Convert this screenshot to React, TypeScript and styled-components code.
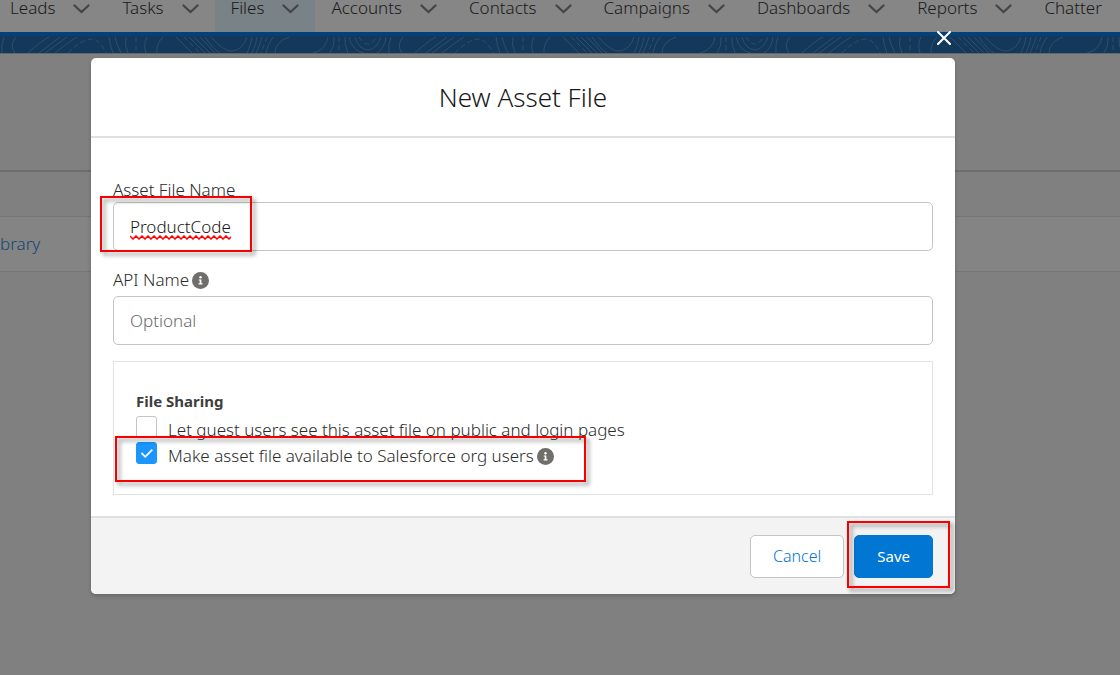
import React from "react";
import styled, { createGlobalStyle } from "styled-components";

const GlobalStyle = createGlobalStyle`
  *, *::before, *::after { box-sizing: border-box; }
  html, body, #root { min-height: 100vh; }
  body {
    margin: 0;
    overflow-x: hidden;
    background: #808080;
    color: #181818;
    font-family: "Noto Sans", "Open Sans", sans-serif;
    font-size: 17px;
    font-weight: 300;
    line-height: 26px;
  }
  button, input { font: inherit; color: inherit; }
`;

const Screen = styled.div`
  position: relative;
  min-height: 100vh;
  overflow: hidden;
`;

/* Page behind the dialog, in its dimmed colours */

const NavBar = styled.nav`
  display: flex;
  height: 36px;
  background: #868686;
  border-bottom: 4px solid #064078;
`;

const NavItem = styled.div<{ $active?: boolean }>`
  display: flex;
  flex: none;
  align-items: flex-start;
  gap: 18px;
  padding: 0 16px;
  background: ${(p) => (p.$active ? "#798287" : "transparent")};

  &:first-child { padding-left: 10px; }
`;

const NavLink = styled.a`
  color: #1a1a1a;
  line-height: 16px;
  text-decoration: none;
`;

const NavToggle = styled.button`
  display: flex;
  width: 17px;
  height: 18px;
  padding: 0;
  align-items: center;
  border: 0;
  background: none;
`;

const Band = styled.div`
  height: 18px;
  background: #143859;
  border-bottom: 1px solid #60686f;

  svg { display: block; }
`;

const PageHeader = styled.div`
  height: 118px;
  border-bottom: 2px solid #6d6d6d;
`;

const ColumnHeader = styled.div`
  height: 45px;
  border-bottom: 1px solid #757575;
`;

const ListRow = styled.div`
  display: flex;
  height: 55px;
  align-items: center;
  background: #848484;
  border-bottom: 1px solid #757575;
`;

const RowLink = styled.a`
  color: #124876;
  text-decoration: none;
`;

/* Dialog */

const Overlay = styled.div`
  position: absolute;
  inset: 0;
  display: flex;
  align-items: flex-start;
  padding: 58px 165px 58px 91px;
`;

const Dialog = styled.section`
  position: relative;
  flex: 1;
  border-radius: 5px;
  background: #fff;
  box-shadow: 0 2px 4px rgba(0, 0, 0, 0.2);
`;

const CloseButton = styled.button`
  position: absolute;
  top: -30px;
  right: 1px;
  display: flex;
  width: 20px;
  height: 20px;
  padding: 0;
  align-items: center;
  justify-content: center;
  border: 0;
  background: none;
`;

const DialogHeader = styled.header`
  padding: 21px 16px;
  border-bottom: 2px solid #e0e0e0;
  text-align: center;
`;

const Title = styled.h2`
  margin: 0;
  font-size: 26px;
  font-weight: 300;
  line-height: 36px;
`;

const DialogBody = styled.div`
  display: flex;
  flex-direction: column;
  gap: 16px;
  padding: 40px 22px 21px;
`;

const Field = styled.div`
  position: relative;
`;

const LabelRow = styled.div<{ $below?: number }>`
  display: flex;
  height: ${(p) => (p.$below ? 26 : 24)}px;
  margin-bottom: ${(p) => p.$below ?? 0}px;
  align-items: center;
  gap: 3px;
  color: #2b2b2b;
`;

const InputFrame = styled.div`
  position: relative;
`;

const TextInput = styled.input`
  display: block;
  width: 100%;
  height: 49px;
  padding: 0 16px;
  border: 1px solid #c4c4c4;
  border-radius: 5px;
  background: #fff;
  outline: 0;

  &::placeholder { color: #6b6b6b; opacity: 1; }
`;

const SpellingMark = styled.svg`
  position: absolute;
  left: 17px;
  bottom: 11px;
`;

const Sharing = styled.div`
  padding: 28px 22px 26px;
  border: 1px solid #e2e2e2;
`;

const SharingTitle = styled.h3`
  margin: 0 0 4px;
  color: #3e3e3c;
  font-size: 15px;
  font-weight: 700;
  line-height: 22px;
`;

const CheckRow = styled.div`
  position: relative;
  display: flex;
  height: 26px;
  align-items: flex-start;
  color: #2b2b2b;
  line-height: 28px;
`;

const Checkbox = styled.input`
  flex: none;
  width: 21px;
  height: 22px;
  margin: 0 11px 0 0;
  appearance: none;
  border: 1px solid #c4c4c4;
  border-radius: 3px;
  background: #fff;

  &:checked {
    border-color: #1b96ff;
    background: #1b96ff;
  }
`;

const Tick = styled.svg`
  position: absolute;
  left: 4px;
  top: 4px;
  pointer-events: none;
`;

const InfoButton = styled.button`
  display: flex;
  height: 28px;
  padding: 0;
  align-items: center;
  border: 0;
  background: none;
`;

const CheckLabel = styled.label`
  margin-right: 3px;
`;

const DialogFooter = styled.footer`
  display: flex;
  justify-content: flex-end;
  gap: 10px;
  padding: 17px 22px 16px;
  border-top: 2px solid #e0e0e0;
  border-radius: 0 0 5px 5px;
  background: #f3f3f3;
`;

const ActionFrame = styled.div`
  position: relative;
`;

const Action = styled.button<{ $primary?: boolean }>`
  display: block;
  height: 43px;
  padding: 0 22px 2px;
  border: 1px solid ${(p) => (p.$primary ? "#0176d3" : "#c4c4c4")};
  border-radius: 5px;
  background: ${(p) => (p.$primary ? "#0176d3" : "#fff")};
  color: ${(p) => (p.$primary ? "#fff" : "#0176d3")};
  font-size: ${(p) => (p.$primary ? 15 : 16)}px;
  font-weight: ${(p) => (p.$primary ? 400 : 300)};
`;

const Highlight = styled.div<{ $x: number; $y: number; $w: number; $h: number }>`
  position: absolute;
  z-index: 1;
  left: ${(p) => p.$x}px;
  top: ${(p) => p.$y}px;
  width: ${(p) => p.$w}px;
  height: ${(p) => p.$h}px;
  border: 2px solid #f80000;
  filter: drop-shadow(3px 3px 2px rgba(0, 0, 0, 0.45));
  pointer-events: none;
`;

const tabs = [
  "Leads", "Tasks", "Files", "Accounts", "Contacts",
  "Campaigns", "Dashboards", "Reports", "Chatter",
];

const Contours = () => (
  <svg width="100%" height="17" aria-hidden="true">
    <defs>
      <pattern id="contours" width="387" height="17" patternUnits="userSpaceOnUse">
        <g fill="none" stroke="#2d4d6b" strokeWidth="1">
          <path d="M4 1Q1 8 2 17M16 1Q9 9 15 17M49 1Q41 5 28 17M60 1L39 17M67 1L45 17M77 1Q70 5 55 17" />
          <path d="M68 17Q82 3 92 3Q100 4 106 17" strokeDasharray="5 3" />
          <path d="M109 1Q110 10 113 17M115 1Q117 10 121 17M126 1Q124 9 128 17M147 1Q143 8 146 17M163 1Q156 8 157 17" />
          <path d="M136 1V17M184 1L200 17" strokeDasharray="5 3" />
          <path d="M176 1L192 17M189 1L205 17M194 1L210 17M200 1L215 17M205 1Q213 13 220 17M211 1Q223 15 232 15Q243 14 247 1" />
          <path d="M252 1Q251 9 247 17M257 1Q256 9 252 17M262 1Q260 9 256 17M273 1Q267 9 266 17M289 1Q275 6 275 17" />
          <path d="M267 1Q264 9 261 17M339 1V17" strokeDasharray="5 3" />
          <path d="M328 1Q326 14 313 17M334 1Q335 10 330 17M345 1Q344 8 348 17M349 1Q352 15 364 17M355 1Q358 13 368 14Q377 13 381 1M386 1Q385 12 377 17" />
          <path d="M359 1Q364 9 369 8Q374 6 376 1" strokeDasharray="5 3" />
        </g>
      </pattern>
    </defs>
    <rect width="100%" height="17" fill="url(#contours)" />
  </svg>
);

const Info = ({ topic }: { topic: string }) => (
  <InfoButton type="button" aria-label={`Help: ${topic}`}>
    <svg width="17" height="17" viewBox="0 0 17 17" aria-hidden="true">
      <circle cx="8.5" cy="8.5" r="8.5" fill="#706e6b" />
      <circle cx="8.5" cy="5.2" r="1.2" fill="#fff" />
      <path d="M6.7 7.4H9.4V11.2H10.5V12.4H6.6V11.2H7.7V8.6H6.7Z" fill="#fff" />
    </svg>
  </InfoButton>
);

const Squiggle = () => {
  let d = "M0 1";
  for (let x = 3; x <= 102; x += 3) d += `L${x} ${x % 2 ? 4 : 1}`;
  return (
    <SpellingMark width="101" height="5" aria-hidden="true">
      <path d={d} fill="none" stroke="#f00" strokeWidth="1.5" />
    </SpellingMark>
  );
};

export default function App() {
  return (
    <Screen>
      <GlobalStyle />
      <NavBar>
        {tabs.map((tab) => (
          <NavItem key={tab} $active={tab === "Files"}>
            <NavLink href="#">{tab}</NavLink>
            {tab !== "Chatter" && (
              <NavToggle type="button" aria-label={`${tab} list`}>
                <svg width="17" height="10" viewBox="0 0 17 10" aria-hidden="true">
                  <path d="M1.5 1.5L8.5 8L15.5 1.5" fill="none" stroke="#444" strokeWidth="2.2" strokeLinecap="round" />
                </svg>
              </NavToggle>
            )}
          </NavItem>
        ))}
      </NavBar>
      <Band><Contours /></Band>
      <PageHeader />
      <ColumnHeader />
      <ListRow><RowLink href="#">brary</RowLink></ListRow>

      <Overlay>
        <Dialog role="dialog" aria-modal="true" aria-labelledby="dialog-title">
          <CloseButton type="button" aria-label="Close">
            <svg width="14" height="14" viewBox="0 0 14 14" aria-hidden="true">
              <path d="M1 1L13 13M13 1L1 13" stroke="#fff" strokeWidth="2" strokeLinecap="round" />
            </svg>
          </CloseButton>
          <DialogHeader><Title id="dialog-title">New Asset File</Title></DialogHeader>
          <DialogBody>
            <Field>
              <LabelRow><label htmlFor="asset-name">Asset File Name</label></LabelRow>
              <InputFrame>
                <TextInput id="asset-name" type="text" defaultValue="ProductCode" />
                <Squiggle />
                <Highlight $x={-13} $y={-6} $w={152} $h={56} />
              </InputFrame>
            </Field>
            <Field>
              <LabelRow $below={3}>
                <label htmlFor="api-name">API Name</label>
                <Info topic="API Name" />
              </LabelRow>
              <TextInput id="api-name" type="text" placeholder="Optional" />
            </Field>
            <Sharing role="group" aria-labelledby="sharing-title">
              <SharingTitle id="sharing-title">File Sharing</SharingTitle>
              <CheckRow>
                <Checkbox id="guest-users" type="checkbox" />
                <CheckLabel htmlFor="guest-users">Let guest users see this asset file on public and login pages</CheckLabel>
              </CheckRow>
              <CheckRow>
                <Checkbox id="org-users" type="checkbox" defaultChecked />
                <Tick width="14" height="14" viewBox="0 0 14 14" aria-hidden="true">
                  <path d="M1.5 7L5.3 10.8L12.3 3.6" fill="none" stroke="#fff" strokeWidth="1.8" />
                </Tick>
                <CheckLabel htmlFor="org-users">Make asset file available to Salesforce org users</CheckLabel>
                <Info topic="Salesforce org users" />
                <Highlight $x={-21} $y={-6} $w={471} $h={46} />
              </CheckRow>
            </Sharing>
          </DialogBody>
          <DialogFooter>
            <Action type="button">Cancel</Action>
            <ActionFrame>
              <Action type="button" $primary>Save</Action>
              <Highlight $x={-7} $y={-14} $w={103} $h={67} />
            </ActionFrame>
          </DialogFooter>
        </Dialog>
      </Overlay>
    </Screen>
  );
}
